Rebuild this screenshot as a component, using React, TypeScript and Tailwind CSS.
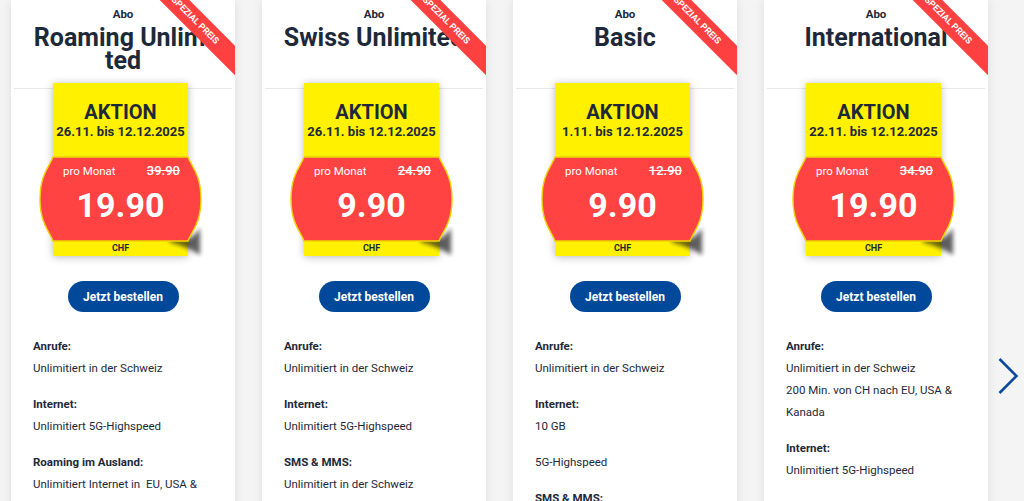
import React from "react";

type Block = { label?: string; lines: string[] };

type Plan = {
  title: string[];
  from: string;
  old: string;
  price: string;
  blocks: Block[];
};

const plans: Plan[] = [
  {
    title: ["Roaming Unlimi", "ted"],
    from: "26.11.",
    old: "39.90",
    price: "19.90",
    blocks: [
      { label: "Anrufe:", lines: ["Unlimitiert in der Schweiz"] },
      { label: "Internet:", lines: ["Unlimitiert 5G-Highspeed"] },
      { label: "Roaming im Ausland:", lines: ["Unlimitiert Internet in \u00a0EU, USA &"] },
    ],
  },
  {
    title: ["Swiss Unlimited"],
    from: "26.11.",
    old: "24.90",
    price: "9.90",
    blocks: [
      { label: "Anrufe:", lines: ["Unlimitiert in der Schweiz"] },
      { label: "Internet:", lines: ["Unlimitiert 5G-Highspeed"] },
      { label: "SMS & MMS:", lines: ["Unlimitiert in der Schweiz"] },
    ],
  },
  {
    title: ["Basic"],
    from: "1.11.",
    old: "12.90",
    price: "9.90",
    blocks: [
      { label: "Anrufe:", lines: ["Unlimitiert in der Schweiz"] },
      { label: "Internet:", lines: ["10 GB"] },
      { lines: ["5G-Highspeed"] },
      { label: "SMS & MMS:", lines: ["Unlimitiert in der Schweiz"] },
    ],
  },
  {
    title: ["International"],
    from: "22.11.",
    old: "34.90",
    price: "19.90",
    blocks: [
      {
        label: "Anrufe:",
        lines: ["Unlimitiert in der Schweiz", "200 Min. von CH nach EU, USA &", "Kanada"],
      },
      { label: "Internet:", lines: ["Unlimitiert 5G-Highspeed"] },
    ],
  },
];

function PriceTag({ plan }: { plan: Plan }) {
  return (
    <div className="flex justify-center">
      <div className="relative z-10 mr-[5px] -mt-[6px] flex h-[173px] w-[135px] flex-col items-center bg-[#fff100] shadow-[0_1px_8px_rgba(0,0,0,0.28)]">
        <div className="mt-[19px] text-[20px] font-bold leading-[20px] text-[#1d2939]">AKTION</div>
        <div className="mt-[1px] text-[13px] font-bold leading-[18px] text-[#1d2939]">
          {plan.from} bis 12.12.2025
        </div>
        <div className="relative mt-[16px] h-[84px] w-[161px] shrink-0">
          <svg
            className="absolute inset-0 overflow-visible"
            width="161"
            height="84"
            viewBox="0 0 161 84"
          >
            <defs>
              <filter id="curl" x="-50%" y="-50%" width="200%" height="200%">
                <feGaussianBlur stdDeviation="2" />
              </filter>
            </defs>
            <path
              d="M130,80 Q149,89 160,71 L160,98 Q148,90 130,85 Z"
              fill="#1a1a1a"
              opacity="0.7"
              filter="url(#curl)"
            />
            <path
              d="M13,0 H148 C151,9 161,17 161,42 C161,67 151,75 148,84 H13 C10,75 0,67 0,42 C0,17 10,9 13,0 Z"
              fill="#ff4242"
              stroke="#efd400"
              strokeWidth="1.4"
            />
          </svg>
          <div className="relative flex items-center justify-between pl-[23px] pr-[21px] pt-[6px] text-white">
            <span className="text-[11.5px] leading-[16px]">pro Monat</span>
            <span className="text-[13px] font-medium leading-[16px] line-through">{plan.old}</span>
          </div>
          <div className="relative mt-[9px] text-center text-[34px] font-bold leading-[34px] text-white">
            {plan.price}
          </div>
        </div>
        <div className="mt-[1px] text-[9px] font-bold leading-[12px] text-[#1d2939]">CHF</div>
      </div>
    </div>
  );
}

function Card({ plan }: { plan: Plan }) {
  return (
    <div className="relative h-[520px] w-[224px] shrink-0 overflow-hidden bg-white shadow-[0_0_10px_rgba(0,0,0,0.09)]">
      <div className="absolute left-[99px] top-[10px] z-20 flex h-[21px] w-[170px] rotate-45 items-center justify-center bg-[#ff4040] text-[9px] font-bold text-white">
        SPEZIAL PREIS
      </div>
      <div className="mx-[3px] h-[89px] border-b border-[#e6e8eb] pt-[6px] text-center text-[#1d2939]">
        <div className="text-[11.5px] font-bold leading-[16px]">Abo</div>
        <div className="mt-[4px] whitespace-nowrap text-[25px] font-bold leading-[23px]">
          {plan.title.map((t) => (
            <div key={t}>{t}</div>
          ))}
        </div>
      </div>
      <PriceTag plan={plan} />
      <div className="mt-[25px] flex justify-center">
        <button className="h-[31px] w-[111px] rounded-full bg-[#00489a] text-[12px] font-bold text-white">
          Jetzt bestellen
        </button>
      </div>
      <div className="mt-[23px] px-[22px] text-[11.5px] leading-[22px] text-[#1d2939]">
        {plan.blocks.map((b, i) => (
          <div key={i} className="mb-[14px]">
            {b.label && <div className="font-bold">{b.label}</div>}
            {b.lines.map((l) => (
              <div key={l}>{l}</div>
            ))}
          </div>
        ))}
      </div>
    </div>
  );
}

export default function App() {
  return (
    <main
      className="relative h-[501px] w-[1024px] overflow-hidden bg-[#f4f4f5]"
      style={{ fontFamily: "Roboto, 'Noto Sans', sans-serif" }}
    >
      <div className="flex gap-[27px] pl-[11px]">
        {plans.map((p) => (
          <Card key={p.title.join("")} plan={p} />
        ))}
      </div>
      <button className="absolute left-[997px] top-[357px] z-10" aria-label="Weiter">
        <svg width="22" height="38" viewBox="0 0 22 38" fill="none">
          <path d="M2.5 2 L19.5 19 L2.5 36" stroke="#0b4a98" strokeWidth="2.6" strokeLinejoin="miter" />
        </svg>
      </button>
    </main>
  );
}
